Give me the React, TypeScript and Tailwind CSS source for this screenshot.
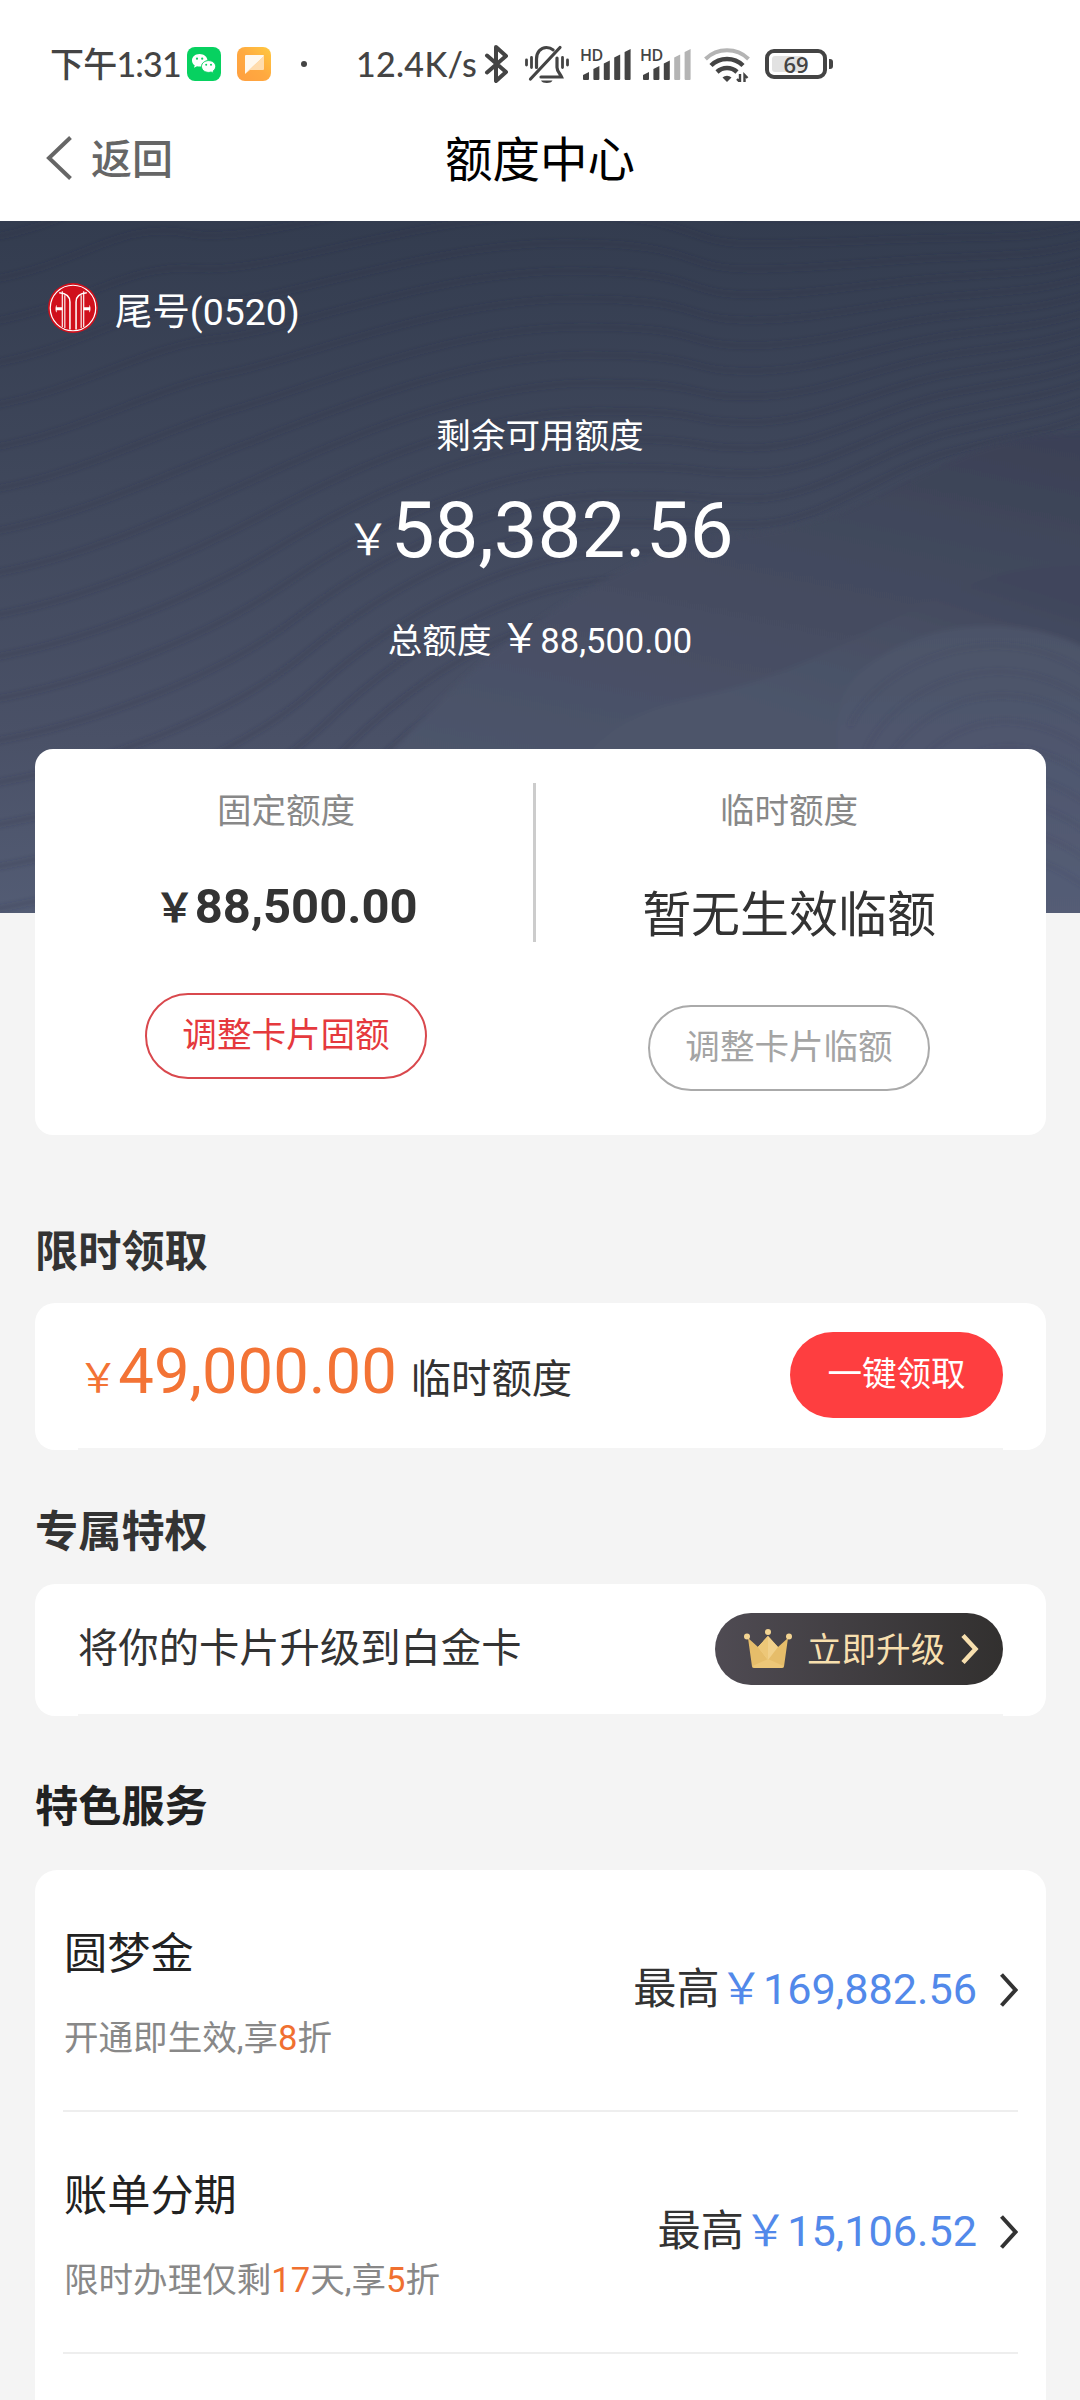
import type { ReactNode } from "react";

interface Service {
  title: string;
  desc: ReactNode;
  amount: string;
}

const services: Service[] = [
  {
    title: "圆梦金",
    desc: <>开通即生效,享<Hot>8</Hot>折</>,
    amount: "169,882.56",
  },
  {
    title: "账单分期",
    desc: <>限时办理仅剩<Hot>17</Hot>天,享<Hot>5</Hot>折</>,
    amount: "15,106.52",
  },
];

function Hot({ children }: { children: ReactNode }) {
  return <span className="text-[#f07030]">{children}</span>;
}

const WechatIcon = () => (
  <svg viewBox="0 0 34 34" className="size-[34px]">
    <rect width="34" height="34" rx="8" fill="#07d160" />
    <path d="M12.500 7C8 7 5 9.900 5 13.400c0 2 1 3.700 2.700 4.900L7 20.800l3-1.500c.9.200 1.700.3 2.600.3 4.400 0 7.800-2.800 7.800-6.200C20.400 9.900 17 7 12.500 7Z" fill="#fff" />
    <path d="M21.600 13.600c-4 0-7.100 2.600-7.100 5.900s3.100 5.900 7.100 5.900c.9 0 1.700-.1 2.500-.4l2.600 1.400-.6-2.300c1.600-1.100 2.600-2.700 2.600-4.600 0-3.300-3.100-5.900-7.100-5.900Z" fill="#fff" stroke="#07d160" strokeWidth="1" />
    <circle cx="10" cy="11.700" r="1.100" fill="#07d160" />
    <circle cx="15.200" cy="11.700" r="1.100" fill="#07d160" />
    <circle cx="19.200" cy="17.800" r="1" fill="#07d160" />
    <circle cx="24" cy="17.800" r="1" fill="#07d160" />
  </svg>
);

const NoteIcon = () => (
  <svg viewBox="0 0 34 34" className="size-[34px]">
    <defs>
      <linearGradient id="note" x1="1" y1="0" x2="0" y2="1">
        <stop offset="0" stopColor="#ffc940" />
        <stop offset=".5" stopColor="#ffa940" />
        <stop offset="1" stopColor="#ff9f40" />
      </linearGradient>
    </defs>
    <rect width="34" height="34" rx="8" fill="url(#note)" />
    <path d="M27 9v13a1 1 0 0 1-1 1H13l-5 4Z" fill="#ffdcae" />
    <path d="M9 8h17a1 1 0 0 1 1 1L8 27V9a1 1 0 0 1 1-1Z" fill="#fff8ee" />
  </svg>
);

const BluetoothIcon = () => (
  <svg viewBox="0 0 26 38" className="h-[38px] w-[26px]" fill="none" stroke="#444" strokeWidth="4" strokeLinejoin="round" strokeLinecap="round">
    <path d="M3 10.500 22 27 12 36V2l10 9L3 27.500" />
  </svg>
);

const MuteIcon = () => (
  <svg viewBox="0 0 44 38" className="h-[38px] w-[44px]" fill="none" stroke="#444" strokeWidth="2.800" strokeLinecap="round">
    <path d="M1.500 15v5M6.500 12.500v10M42.500 15v5M37.500 12.500v10" />
    <path d="M5.500 34 35 2.500" strokeWidth="3.200" />
    <path d="M11.500 22.500V14c0-6.500 4-11.500 10-11.500 2.600 0 4.800.8 6.600 2.400" strokeWidth="3.200" />
    <path d="M32 13v9.500c0 3.500 3 6 4.500 9.500H16" strokeWidth="3.200" />
    <path d="M16 35.500h11.500c-1 1.800-3 2.500-5.700 2.500S17 37.300 16 35.500Z" fill="#444" stroke="none" />
  </svg>
);

const SignalIcon = ({ level }: { level: number }) => (
  <div className="relative h-[32px] w-[50px]">
    <span className="absolute left-[-1px] top-0 font-['Open_Sans'] text-[16px] font-semibold leading-[14px] tracking-[-0.5px]">HD</span>
    <svg viewBox="0 0 50 32" className="h-[32px] w-[50px]">
      {[7, 13, 18.500, 24.500, 30].map((h, i) => (
        <path
          key={h}
          d={`M${2 + i * 10.400} ${31 - h + 3}l6-3v${h}a1 1 0 0 1-1 1h-4a1 1 0 0 1-1-1Z`}
          fill={i < level ? "#444" : "#b4b4b4"}
        />
      ))}
    </svg>
  </div>
);

const WifiIcon = () => (
  <svg viewBox="0 0 46 36" className="h-[36px] w-[46px]" fill="none" strokeWidth="4">
    <path d="M1.500 13a31 31 0 0 1 43 0" stroke="#b4b4b4" />
    <path d="M7 19.500a23 23 0 0 1 32 0" stroke="#444" strokeWidth="4.500" />
    <path d="M13 26a14.500 14.500 0 0 1 20 0" stroke="#444" strokeWidth="4.500" />
    <path d="M18.500 31.500a6.500 6.500 0 0 1 9 0L23 36Z" fill="#444" />
    <path d="M36 28v8l-3-3M40.500 36v-7l3 3" stroke="#444" strokeWidth="2.400" />
  </svg>
);

const Battery = () => (
  <div className="flex items-center gap-[2px]">
    <div className="relative flex h-[30px] w-[62px] items-center justify-center rounded-[9px] border-4 border-[#444]">
      <div className="absolute left-[3px] top-[3px] h-4 w-[32px] rounded-[3px] bg-[#e2e2e2]" />
      <span className="relative font-['Open_Sans'] text-[22px] font-semibold leading-[22px]">69</span>
    </div>
    <div className="h-[10px] w-[4px] rounded-r-[3px] bg-[#444]" />
  </div>
);

const StatusBar = () => (
  <div className="flex h-[100px] items-center pl-[50px] pt-[28px] font-[Lato,'Noto_Sans_CJK_SC',sans-serif] text-[34px] font-medium leading-[48px] text-[#444]">
    <div className="w-[137px] whitespace-nowrap tracking-[-0.8px]">下午1:31</div>
    <WechatIcon />
    <div className="w-4" />
    <NoteIcon />
    <div className="ml-[30px] size-[6px] rounded-full bg-[#444]" />
    <div className="ml-[49px] w-[128px] whitespace-nowrap tracking-[0.3px]">12.4K/s</div>
    <BluetoothIcon />
    <div className="w-[15px]" />
    <MuteIcon />
    <div className="w-3" />
    <SignalIcon level={5} />
    <div className="w-[10px]" />
    <SignalIcon level={3} />
    <div className="w-[13px]" />
    <WifiIcon />
    <div className="w-[15px]" />
    <Battery />
  </div>
);

const NavBar = () => (
  <div className="relative flex h-[121px] items-center justify-center">
    <div className="absolute left-[46px] flex items-center gap-[19px] pt-[1px] text-[41px] font-medium text-[#666]">
      <svg viewBox="0 0 26 44" className="mt-[-6px] h-[44px] w-[26px]" fill="none" stroke="#666" strokeWidth="4">
        <path d="M24.500 1.500 3 22l21.500 20.500" />
      </svg>
      返回
    </div>
    <h1 className="text-[47.500px] leading-[60px] text-black">额度中心</h1>
  </div>
);

const BankLogo = () => (
  <svg viewBox="0 0 49 49" className="size-[50px]">
    <circle cx="24.500" cy="24.500" r="24.500" fill="#d0101c" />
    <circle cx="24.500" cy="24.500" r="22.300" fill="none" stroke="#fff" strokeWidth="1.200" />
    <g fill="none" stroke="#fff" strokeWidth="1.500">
      <path d="M11 9.500c6 .5 10.500 3 10.500 9v27M38 9.500c-6 .5-10.500 3-10.500 9v27" />
      <path d="M14 8v35M16.500 12v32M35 8v35M32.500 12v32" strokeWidth="1.100" />
    </g>
    <path d="M8.500 21.500v2.300H14v3H8.500V29c-1.500-1-1.500-6.500 0-7.500ZM40.500 21.500v2.300H35v3h5.500V29c1.500-1 1.500-6.500 0-7.500Z" fill="#fff" />
  </svg>
);

// contour lines that sweep from the lower left over a crest to the right edge
const contours = Array.from({ length: 22 }, (_, i) => {
  const p = i * 28 - 90;
  const left = 110 + p * 1.500;
  const dip = p + 28 * (1 - p / 320);
  return [
    `M-10 ${left}`,
    `C80 ${left - 15} ${130 + p * 0.300} ${left - 60} ${200 + p * 0.350} ${(left + p) / 2}`,
    `S${420 + p * 0.300} ${p} ${560 + p * 0.200} ${p}`,
    `S680 ${dip} 750 ${dip}`,
    `S${880} ${dip * 0.820} 950 ${dip * 0.760}`,
    `S1040 ${dip * 0.700} 1090 ${dip * 0.680 - 12}`,
  ].join("");
});

const HeroWaves = () => (
  <svg viewBox="0 0 1080 692" className="absolute inset-0 h-full w-full">
    <defs>
      <linearGradient id="sky" x1="0" y1="0" x2="0" y2="1">
        <stop offset="0" stopColor="#333c4f" />
        <stop offset=".4" stopColor="#40485c" />
        <stop offset=".75" stopColor="#4a5167" />
        <stop offset="1" stopColor="#535c74" />
      </linearGradient>
      <linearGradient id="hill" gradientUnits="userSpaceOnUse" x1="1000" y1="210" x2="900" y2="692">
        <stop offset="0" stopColor="#3b4156" />
        <stop offset=".3" stopColor="#42495d" />
        <stop offset=".65" stopColor="#495066" />
        <stop offset="1" stopColor="#4f576e" />
      </linearGradient>
      <linearGradient id="hillNear" gradientUnits="userSpaceOnUse" x1="980" y1="350" x2="920" y2="540">
        <stop offset="0" stopColor="#40455b" />
        <stop offset=".35" stopColor="#464e62" />
        <stop offset="1" stopColor="#4d556b" />
      </linearGradient>
      <linearGradient id="knoll" x1="0" y1="0" x2="0" y2="1">
        <stop offset="0" stopColor="#4c5368" />
        <stop offset="1" stopColor="#545d76" />
      </linearGradient>
      <filter id="soften">
        <feGaussianBlur stdDeviation="2.500" />
      </filter>
    </defs>
    <rect width="1080" height="692" fill="url(#sky)" />
    <g fill="none" stroke="#2b3045" strokeOpacity=".28" strokeWidth="4" filter="url(#soften)">
      {contours.map((d) => (
        <path key={d} d={d} />
      ))}
    </g>
    <g filter="url(#soften)">
      <path d="M1100 213C1010 210 975 226 900 265S790 308 720 316 520 400 440 480 330 610 300 700H1100Z" fill="url(#hill)" />
      <path d="M1100 345C1010 340 970 360 880 405S760 462 690 478 560 520 520 700H1100Z" fill="url(#hillNear)" />
      <path d="M1100 435C1040 398 960 395 900 425S838 480 838 520L845 700H1100Z" fill="url(#knoll)" />
    </g>
    <g fill="none" stroke="#3a4058" strokeOpacity=".24" strokeWidth="3" filter="url(#soften)">
      {[0, 26, 50, 76, 102, 130, 158, 186, 214].map((y) => (
        <path key={y} d={`M${850 + y * 0.600} ${505 + y}C${880 + y * 0.500} ${440 + y} 1000 ${390 + y} 1090 ${455 + y}`} />
      ))}
    </g>
  </svg>
);

const Hero = () => (
  <section className="relative h-[692px] text-white">
    <HeroWaves />
    <div className="relative flex flex-col items-center pt-[62px]">
      <div className="flex h-[50px] w-full items-center gap-[17px] pl-[48px]">
        <BankLogo />
        <span className="pt-[8px] text-[37.440px]">尾号(0520)</span>
      </div>
      <div className="mt-[83px] text-[34.560px] leading-[40px]">剩余可用额度</div>
      <div className="mt-[30px] h-[90px] text-[78px] leading-[90px]">
        <span className="mr-[1px] align-[2px] text-[43.200px] leading-none">￥</span>58,382.56
      </div>
      <div className="mt-[43px] h-[40px] whitespace-pre text-[34.560px] leading-[40px]">
        总额度 <span className="align-[1px] text-[40.320px] leading-none">￥</span>88,500.00
      </div>
    </div>
  </section>
);

const QuotaCard = () => (
  <section className="relative ml-[35px] -mt-[164px] flex h-[386px] w-[1011px] rounded-[18px] bg-white">
    <div className="flex w-[498px] flex-col items-center pl-1 pt-[42px]">
      <div className="text-[34.560px] leading-[40px] text-[#888]">固定额度</div>
      <div className="mt-[46px] h-[60px] text-[48.960px] font-bold leading-[60px] text-[#333]">
        <span className="align-[1px] text-[40.320px] leading-none">￥</span>88,500.00
      </div>
      <button className="mt-[56px] h-[86px] w-[282px] rounded-full border-2 border-[#d9484d] text-[34.560px] text-[#e5393d]">
        调整卡片固额
      </button>
    </div>
    <div className="mt-[34px] h-[159px] w-[3px] bg-[#ccc]" />
    <div className="flex flex-1 flex-col items-center pr-1 pt-[42px]">
      <div className="text-[34.560px] leading-[40px] text-[#888]">临时额度</div>
      <div className="mt-[55px] text-[48.960px] leading-[60px] text-[#333]">暂无生效临额</div>
      <button className="mt-[59px] h-[86px] w-[282px] rounded-full border-2 border-[#aaa] text-[34.560px] text-[#a4a4a4]">
        调整卡片临额
      </button>
    </div>
  </section>
);

const CrownIcon = () => (
  <svg viewBox="0 0 50 42" className="h-[42px] w-[50px]">
    <path d="M5 10 15 19 25 8l10 11 10-9-4 28.500a2 2 0 0 1-2 1.500H11a2 2 0 0 1-2-1.500Z" fill="#e6bd6a" />
    <path d="m25 8 10 11-10 13-10-13Z" fill="#f1d08a" />
    <path d="M25 8v24L15 19ZM9.500 38 25 31l15.500 7-2 2h-27Z" fill="#edc778" />
    <circle cx="25" cy="4" r="3" fill="#f3d492" />
    <circle cx="4" cy="8.500" r="3" fill="#f3d492" />
    <circle cx="46" cy="8.500" r="3" fill="#f3d492" />
  </svg>
);

const ServiceRow = ({ title, desc, amount }: Service) => (
  <div className="mx-7 flex h-[242px] items-start justify-between border-b-2 border-[#eee]">
    <div className="pl-[1px] pt-[55px]">
      <div className="text-[43.200px] leading-[60px] text-[#222]">{title}</div>
      <div className="mt-[33px] text-[34.560px] leading-[40px] text-[#888]">{desc}</div>
    </div>
    <div className="flex items-center pt-[90px] text-[43.200px] leading-[60px] text-[#333]">
      最高<span className="text-[#5289ea]">￥{amount}</span>
      <svg viewBox="0 0 18 34" className="ml-[23px] h-[34px] w-[18px]" fill="none" stroke="#333" strokeWidth="4">
        <path d="M1.500 1.500 15.500 17 1.500 32.500" />
      </svg>
    </div>
  </div>
);

export default function App() {
  return (
    <main className="h-[2400px] w-[1080px] overflow-hidden bg-[#f4f4f4] font-[Roboto,'Noto_Sans_CJK_SC',sans-serif]">
      <header className="h-[221px] bg-white">
        <StatusBar />
        <NavBar />
      </header>
      <Hero />
      <QuotaCard />

      <h2 className="ml-[35px] mt-[88px] text-[43.200px] font-bold leading-[60px] text-[#333]">限时领取</h2>
      <section className="ml-[35px] mt-5 h-[147px] w-[1011px] rounded-[20px] bg-white px-[43px]">
        <div className="flex h-full items-center justify-between border-b-2 border-[#f4f4f4] pb-[1px]">
          <div className="mb-[9px] h-[90px] text-[63.360px] leading-[90px] text-[#f37335]">
            <span className="align-[1px] text-[40.320px] leading-none">￥</span>49,000.00
            <span className="ml-[14px] text-[40.320px] leading-none text-[#333]">临时额度</span>
          </div>
          <button className="h-[86px] w-[213px] rounded-full bg-[#fe3e40] text-[34.560px] text-white">一键领取</button>
        </div>
      </section>

      <h2 className="ml-[35px] mt-[53px] text-[43.200px] font-bold leading-[60px] text-[#333]">专属特权</h2>
      <section className="ml-[35px] mt-[21px] h-[132px] w-[1011px] rounded-[20px] bg-white px-[43px]">
        <div className="flex h-full items-center justify-between border-b-2 border-[#f4f4f4]">
          <div className="text-[40.320px] leading-[60px] text-[#333]">将你的卡片升级到白金卡</div>
          <button className="flex h-[72px] w-[288px] items-center rounded-full bg-linear-to-r from-[#4f4b53] to-[#32302f] pl-7 text-[34.560px] text-[#f7dfae]">
            <CrownIcon />
            <span className="ml-[14px] pt-[3px]">立即升级</span>
            <svg viewBox="0 0 18 30" className="ml-4 h-[30px] w-[18px]" fill="none" stroke="#f7dfae" strokeWidth="4.500">
              <path d="M2 1.500 14.500 15 2 28.500" />
            </svg>
          </button>
        </div>
      </section>

      <h2 className="ml-[35px] mt-[62px] text-[43.200px] font-bold leading-[60px] text-[#222]">特色服务</h2>
      <section className="ml-[35px] mt-[33px] h-[560px] w-[1011px] rounded-t-[22px] bg-white">
        <div className="-mt-px">
          {services.map((s) => (
            <ServiceRow key={s.title} {...s} />
          ))}
        </div>
      </section>
    </main>
  );
}
